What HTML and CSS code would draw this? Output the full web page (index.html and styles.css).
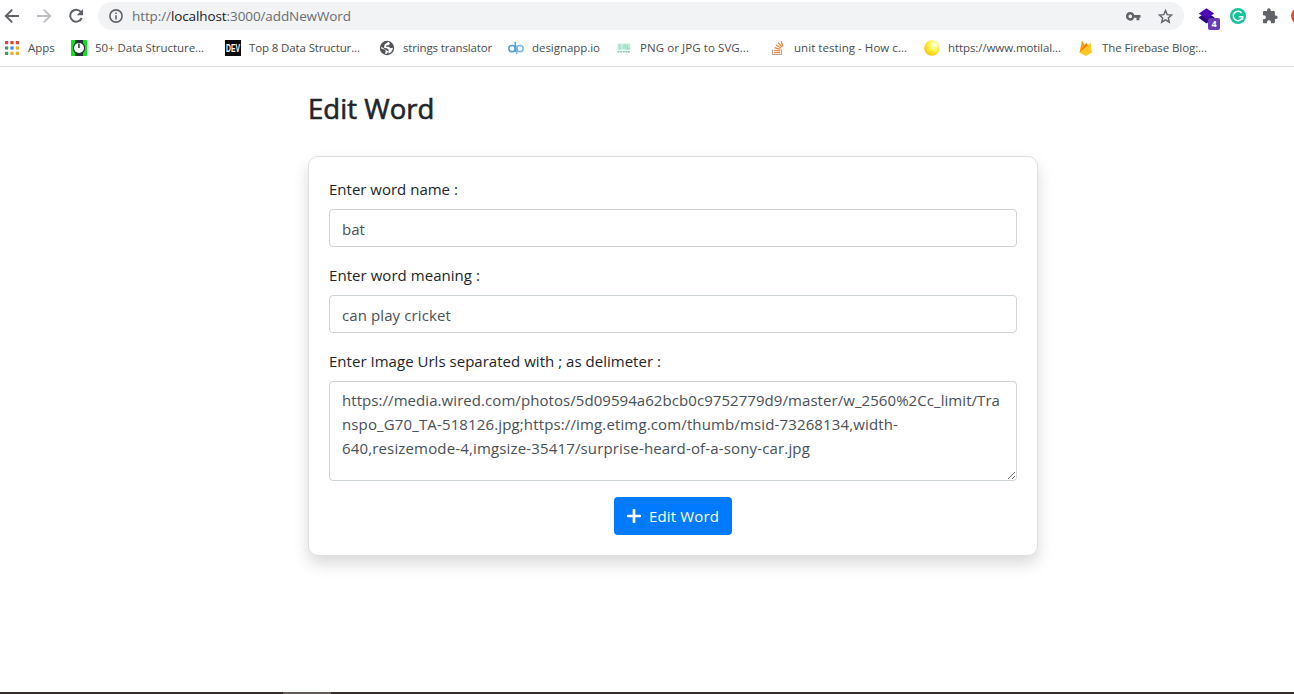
FILE: index.html
```
<!DOCTYPE html>
<html lang="en">
<head>
<meta charset="utf-8">
<title>Edit Word</title>
<link rel="stylesheet" href="styles.css">
</head>
<body>
<div class="window">
  <header class="chrome">
    <div class="toolbar">
      <nav class="nav">
        <svg class="ico" viewBox="0 0 16 16" fill="none" stroke="#5f6368" stroke-width="1.9"><path d="M15 8H2M8.2 1.6 1.8 8l6.4 6.4"/></svg>
        <svg class="ico" viewBox="0 0 16 16" fill="none" stroke="#bdc0c4" stroke-width="1.9"><path d="M1 8h13M7.8 1.6 14.2 8l-6.4 6.4"/></svg>
        <svg class="ico" viewBox="0 0 16 16"><path d="M13.1 4.2A6 6 0 1 0 13.7 10" fill="none" stroke="#5f6368" stroke-width="2"/><path d="M15 1v6.3H8.7z" fill="#5f6368"/></svg>
      </nav>
      <div class="omnibox">
        <svg class="info" viewBox="0 0 14 14"><circle cx="7" cy="7" r="6.1" fill="none" stroke="#5f6368" stroke-width="1.6"/><path d="M6.2 6.2h1.6v4.4H6.2zM6.2 3.4h1.6V5H6.2z" fill="#5f6368"/></svg>
        <span class="url">http://<b class="host">localhost</b>:3000/addNewWord</span>
        <svg class="key" viewBox="0 0 15 9"><path fill="#5f6368" fill-rule="evenodd" d="M4.3 0a4.300 4.300 0 0 1 4 2.900H14.500v2.900h-1.200v2.400h-2.800V5.800H8.300A4.300 4.300 0 1 1 4.300 0zm0 2.600a1.800 1.800 0 1 0 0 3.600 1.800 1.800 0 0 0 0-3.600z"/></svg>
        <svg class="star" viewBox="0 0 15 15"><path d="m7.5 1.6 1.7 4 4.4.4-3.3 2.900 1 4.300-3.800-2.300-3.800 2.300 1-4.300L1.400 6l4.400-.4z" fill="none" stroke="#5f6368" stroke-width="1.4"/></svg>
      </div>
      <div class="extensions">
        <span class="layers">
          <svg viewBox="0 0 17 16"><path d="m8.5 4.600 8.200 5-8.200 5.800L.3 9.600z" fill="#2b0a78"/><path d="m8.500.3 7.600 5.300-7.600 5.300L.9 5.600z" fill="#4b07b8"/></svg>
          <span class="badge">4</span>
        </span>
        <svg class="grammar" viewBox="0 0 16 16"><circle cx="8" cy="8" r="8" fill="#15c39a"/><path d="M11.600 4.900A4.700 4.700 0 1 0 12.600 8.800H8.800M12.600 8.800v3" fill="none" stroke="#fff" stroke-width="1.500"/></svg>
        <svg class="puzzle" viewBox="0 0 16 16"><path fill="#5f6368" d="M13.900 7.400h-1V4.500c0-.8-.6-1.400-1.400-1.400H8.700V2a1.800 1.800 0 0 0-3.600 0v1.100H2.300C1.500 3.100.9 3.700.9 4.500v2.700h1a2 2 0 0 1 0 4h-1v2.700c0 .8.6 1.400 1.400 1.400H5v-1a2 2 0 0 1 4 0v1h2.500c.8 0 1.400-.6 1.400-1.400V11h1a1.800 1.800 0 0 0 0-3.600z"/></svg>
        <span class="avatar"></span>
      </div>
    </div>
    <nav class="bookmarks">
      <a class="bm bm-apps"><svg viewBox="0 0 14 14"><path d="M0 0h3.200v3.200H0z" fill="#e0443a"/><path d="M5.400 0h3.200v3.200H5.400zM10.800 0H14v3.200h-3.200z" fill="#d9482f"/><path d="M0 5.400h3.200v3.200H0z" fill="#3b9c52"/><path d="M5.400 5.400h3.200v3.200H5.400z" fill="#3f87e8"/><path d="M10.800 5.400H14v3.200h-3.200z" fill="#e8ae2b"/><path d="M0 10.800h3.200V14H0z" fill="#3b9c52"/><path d="M5.400 10.800h3.200V14H5.400zM10.800 10.800H14V14h-3.200z" fill="#e8ae2b"/></svg><span>Apps</span></a>
      <a class="bm bm-gfg"><svg viewBox="0 0 16 16"><path d="M0 0h16v16H0z" fill="#0be31b"/><path d="M4 0h8v3l2 3v4l-2 3v3H4v-3L2 10V6l2-3z" fill="#263238"/><circle cx="8" cy="8" r="5" fill="#fff"/><path d="M7.200 3.500h1.500V8H7.200z" fill="#263238"/></svg><span>50+ Data Structure...</span></a>
      <a class="bm bm-dev"><svg viewBox="0 0 16 16"><path d="M0 0h16v16H0z" fill="#0a0a0a"/><text class="dev" x="1" y="12" textLength="14" lengthAdjust="spacingAndGlyphs">DEV</text></svg><span>Top 8 Data Structur...</span></a>
      <a class="bm bm-strings"><svg viewBox="0 0 16 16"><circle cx="8" cy="8" r="7.200" fill="#505357"/><path d="M9.500 1.800 11 3.500 9.800 5.200H7.500L6.800 6.800h3l1.800 1.500 2.300-.6c0 3-2 5.200-4.400 5.800V11.500L6.500 9.800 3 7.300 2.200 6.800l-.1 1.700 4 1.300.6 1.700L6 13.700l1.200.2 2-2 .6-2-1.500-1.500-3.300-.6.600-3.300z" fill="#fff"/></svg><span>strings translator</span></a>
      <a class="bm bm-design"><svg viewBox="0 0 16 16" fill="none" stroke-width="1.500"><circle cx="4" cy="8.600" r="3.200" stroke="#4b9fd8"/><path d="M7.200 2v10" stroke="#4b9fd8"/><circle cx="12" cy="8.600" r="3.200" stroke="#79b8e4"/><path d="M8.800 5.400V14" stroke="#79b8e4"/></svg><span>designapp.io</span></a>
      <a class="bm bm-png"><svg viewBox="0 0 16 16"><path d="M1.500 3.500h13v6.500h-13z" fill="#c9f0df"/><path d="M4.800 5H3v2h1.800v2H2.600M7.800 9V5h2v4M12.800 5h-1.500v4h1.800V7" fill="none" stroke="#93dcbe"/><path d="M1.500 11.800h13" stroke="#84cdb1" stroke-width="1.600" stroke-dasharray="2 .6"/></svg><span>PNG or JPG to SVG...</span></a>
      <a class="bm bm-unit"><svg viewBox="0 0 16 16" fill="none"><path d="M2.500 9.500v5h9v-5" stroke="#b9aaa0" stroke-width="1.200"/><path d="M4 12.600h6M4.100 10.300l6 .6M4.600 7.700l5.800 1.600M6 5l5.100 3.100M8.200 2.600l3.900 4.500M11 1l1.900 5.300" stroke="#ee843d" stroke-width="1.200"/></svg><span>unit testing - How c...</span></a>
      <a class="bm bm-moti"><svg viewBox="0 0 16 16"><defs><radialGradient id="sun" cx=".68" cy=".3" r=".75"><stop offset="0" stop-color="#fffff2"/><stop offset=".45" stop-color="#fff65a"/><stop offset="1" stop-color="#f4c800"/></radialGradient></defs><circle cx="8" cy="8" r="7.800" fill="url(#sun)"/></svg><span>https://www.motilal...</span></a>
      <a class="bm bm-fire"><svg viewBox="0 0 16 16"><path d="M1.500 12.800 4 .5l3.500 6z" fill="#ffa000"/><path d="m1.500 12.800 6.800-10L11 7z" fill="#f57c00"/><path d="m1.500 12.800 11-10L14 12.800l-6.200 3.200z" fill="#ffca28"/></svg><span>The Firebase Blog:...</span></a>
    </nav>
  </header>
  <main class="page">
    <h3 class="title">Edit Word</h3>
    <form class="card">
      <label class="label" for="name">Enter word name :</label>
      <input class="control" id="name" type="text" value="bat">
      <label class="label label-meaning" for="meaning">Enter word meaning :</label>
      <input class="control control-meaning" id="meaning" type="text" value="can play cricket">
      <label class="label label-urls">Enter Image Urls separated with ; as delimeter :</label>
      <div class="control area" role="textbox" aria-multiline="true"><div class="l1">https://media.wired.com/photos/5d09594a62bcb0c9752779d9/master/w_2560%2Cc_limit/Tra</div><div class="l2">nspo_G70_TA-518126.jpg;https://img.etimg.com/thumb/msid-73268134,width-</div><div class="l3">640,resizemode-4,imgsize-35417/surprise-heard-of-a-sony-car.jpg</div></div>
      <button class="button" type="button"><svg viewBox="0 0 14 14"><path d="M7 1.100v11.800M1.100 7h11.800" stroke="#fff" stroke-width="2.700" stroke-linecap="round"/></svg><span>Edit Word</span></button>
    </form>
  </main>
  <footer class="taskbar"><span class="task"></span></footer>
</div>
</body>
</html>
```
FILE: styles.css
```
* { box-sizing: border-box; }
body {
  margin: 0;
  background: #fff;
  color: #212529;
  font-family: "Open Sans", "Noto Sans", sans-serif;
}
svg { display: block; flex: none; }
.window { height: 694px; display: flex; flex-direction: column; overflow: hidden; }

.chrome { height: 67px; border-bottom: 1px solid #dadce0; }
.toolbar { display: flex; height: 32px; padding-top: 2px; }
.nav { display: flex; gap: 16px; align-items: center; width: 98px; height: 28px; padding-left: 4px; flex: none; }
.ico { width: 16px; height: 16px; }
.omnibox {
  display: flex; align-items: center; flex: none;
  width: 1086px; height: 28px; padding: 0 11px;
  border-radius: 14px; background: #f1f3f4;
}
.info { width: 14px; height: 14px; }
.url { margin-left: 9px; flex: 1; font-size: 13.5px; line-height: 28px; letter-spacing: -0.1px; color: #6a6e72; }
.host { font-weight: 400; color: #202124; }
.key { width: 15px; height: 9px; margin-right: 17px; }
.star { width: 15px; height: 15px; }
.extensions { display: flex; align-items: center; height: 28px; padding-left: 14px; flex: 1; }
.layers { position: relative; width: 17px; margin-right: 15px; flex: none; }
.layers svg { width: 17px; height: 16px; }
.badge {
  position: absolute; left: 10px; top: 10px;
  width: 12px; height: 12px; border-radius: 2px;
  background: #673ab7; color: #fff;
  font-size: 9px; font-weight: 700; line-height: 12px; text-align: center;
}
.grammar { width: 16px; height: 16px; margin-right: 16px; }
.puzzle { width: 16px; height: 16px; margin-right: 13px; }
.avatar { width: 16px; height: 16px; border-radius: 50%; background: #e8511f; flex: none; }

.bookmarks {
  display: grid; align-items: center; height: 32px; padding-left: 5px;
  grid-template-columns: 66px 154px 154px 129px 108px 154px 154px 154px 154px;
}
.bm { display: flex; align-items: center; gap: 8px; font-size: 11.5px; line-height: 16px; color: #4a4d51; white-space: nowrap; }
.bm svg { width: 16px; height: 16px; }
.bm-apps { gap: 9px; }
.bm-apps svg { width: 14px; height: 14px; }
.dev { fill: #fff; font: 700 10.5px "Liberation Sans", sans-serif; letter-spacing: 0; }
.bm-gfg { letter-spacing: -0.045px; }
.bm-dev { letter-spacing: -0.126px; }
.bm-strings { letter-spacing: -0.15px; }
.bm-design { letter-spacing: -0.045px; }
.bm-png { letter-spacing: 0.08px; }
.bm-unit { letter-spacing: 0.05px; }
.bm-moti, .bm-fire { letter-spacing: -0.09px; }

.page { width: 730px; margin-left: 308px; flex: 1; }
.title {
  margin: 25px 0 31px; font-size: 27.5px; font-weight: 500; line-height: 33px;
  letter-spacing: 0.05px; -webkit-text-stroke: 0.6px #212529;
}
.card {
  display: flex; flex-direction: column; height: 400px; padding: 20px;
  border: 1px solid #dfdfdf; border-radius: 10px; background: #fff;
  box-shadow: 0 8px 16px rgba(0, 0, 0, 0.15);
}
.label { margin-bottom: 8px; font-size: 15px; line-height: 24px; }
.label-meaning { letter-spacing: 0.05px; }
.label-urls { letter-spacing: 0.025px; }
.control {
  width: 100%; height: 38px; margin: 0 0 16px; padding: 7px 12px 5px;
  border: 1px solid #ced4da; border-radius: 4px; background: #fff;
  color: #495057; font: 15px/24px "Open Sans", sans-serif; letter-spacing: 0.05px; flex: none;
}
.control-meaning { letter-spacing: 0.1px; }
.area { height: 100px; padding: 6px 12px; overflow: auto; resize: vertical; white-space: nowrap; }
.l1 { letter-spacing: 0.063px; }
.l2 { letter-spacing: 0.135px; }
.l3 { letter-spacing: 0.154px; }
.button {
  display: flex; align-items: center; align-self: center; gap: 8px;
  width: 118px; height: 38px; padding: 0 13px; border: 0; border-radius: 4px;
  background: #007bff; color: #fff; font: 15px/24px "Open Sans", sans-serif; letter-spacing: 0.14px; white-space: nowrap;
}
.button svg { width: 14px; height: 14px; }
.taskbar { height: 2px; padding-left: 283px; background: #392c2a; }
.task { display: block; width: 48px; height: 2px; background: #655a58; }
```
